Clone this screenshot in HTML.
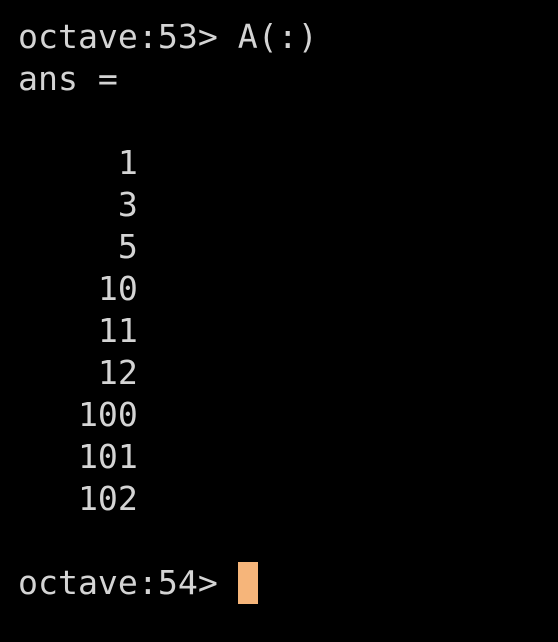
<!DOCTYPE html>
<html><head><meta charset="utf-8"><style>
html,body{margin:0;padding:0;background:#000;width:558px;height:642px;overflow:hidden}
pre{margin:0;position:absolute;left:18px;top:16px;font-family:"DejaVu Sans Mono","Liberation Mono",monospace;font-size:33.2px;line-height:42px;color:#d4d4d4}
.cur{display:inline-block;width:20px;height:42px;background:#f6b57a;vertical-align:top}
</style></head><body>
<pre>octave:53&gt; A(:)
ans =

     1
     3
     5
    10
    11
    12
   100
   101
   102

octave:54&gt; <span class="cur"></span></pre>
</body></html>
